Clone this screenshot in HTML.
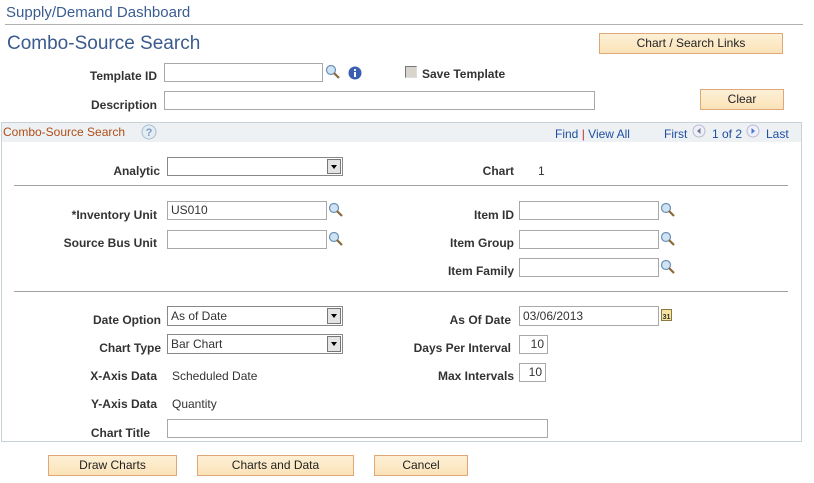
<!DOCTYPE html>
<html><head><meta charset="utf-8"><style>
body{margin:0;width:814px;height:483px;background:#fff;font-family:"Liberation Sans",Arial,sans-serif;position:relative;overflow:hidden}
.a{position:absolute}
.l{position:absolute;font-weight:bold;font-size:12px;color:#333;text-align:right;white-space:nowrap;line-height:14px}
.t{position:absolute;font-size:12px;color:#333;line-height:14px;white-space:nowrap}
.in{position:absolute;box-sizing:border-box;border:1px solid #a8a8a8;background:#fff;font-size:12px;color:#333;line-height:16px;padding-left:3px}
.btn{position:absolute;box-sizing:border-box;border:1px solid #e0a878;background:linear-gradient(#fdf0d6,#fbe3b8);font-size:12px;color:#222;text-align:center;line-height:18px}
.dd{position:absolute;right:1px;top:1px;width:14px;bottom:1px;background:#e4e4e4;border-left:1px solid #888;border:1px solid #777;box-sizing:border-box}
.dd:after{content:"";position:absolute;left:3px;top:5px;border:3.5px solid transparent;border-top:4px solid #000}
.sep{position:absolute;height:1px;background:#a0a0a0}
.link{color:#1f4fa0}
</style></head><body>
<div class="a" style="left:6px;top:4px;font-size:15px;color:#3a5d91">Supply/Demand Dashboard</div>
<div class="sep" style="left:5px;top:24px;width:798px;background:#b0b0b0"></div>
<div class="a" style="left:7px;top:33px;font-size:19px;color:#3b5a8e">Combo-Source Search</div>
<div class="btn" style="left:599px;top:33px;width:184px;height:21px">Chart / Search Links</div>

<div class="l" style="right:657px;top:69px">Template ID</div>
<div class="in" style="left:164px;top:63px;width:159px;height:19px"></div>
<svg class="a" style="left:325px;top:64px" width="16" height="16"><circle cx="6" cy="6" r="4.5" fill="#cfe3f5" stroke="#6b8fb5" stroke-width="1.2"/><line x1="9" y1="9" x2="14" y2="14" stroke="#8a6a3a" stroke-width="2.2"/></svg>
<svg class="a" style="left:348px;top:66px" width="14" height="14"><circle cx="7" cy="7" r="6.5" fill="#3a5fb0"/><rect x="6" y="6" width="2" height="5" fill="#fff"/><circle cx="7" cy="4" r="1.1" fill="#fff"/></svg>
<div class="a" style="left:405px;top:66px;width:12px;height:12px;box-sizing:border-box;border:1px solid #777;border-right-color:#ddd;border-bottom-color:#ddd;background:#d8d4cc"></div>
<div class="l" style="left:422px;top:67px">Save Template</div>

<div class="l" style="right:657px;top:98px">Description</div>
<div class="in" style="left:164px;top:91px;width:431px;height:19px"></div>
<div class="btn" style="left:700px;top:89px;width:84px;height:21px">Clear</div>

<div class="a" style="left:1px;top:122px;width:801px;height:320px;box-sizing:border-box;border:1px solid #c8d0d8"></div>
<div class="a" style="left:2px;top:123px;width:799px;height:19px;background:#edf1f4"></div>
<div class="a" style="left:3px;top:125px;font-size:12px;color:#b04d18">Combo-Source Search</div>
<svg class="a" style="left:141px;top:124px" width="16" height="16"><circle cx="8" cy="8" r="7" fill="#e4ecf4" stroke="#a9bdd2"/><text x="8" y="12" font-size="11" font-weight="bold" text-anchor="middle" fill="#7b9ac0" font-family="Liberation Sans">?</text></svg>
<div class="t" style="left:555px;top:127px"><span class="link">Find</span> <span style="color:#c03030">|</span> <span class="link">View All</span></div>
<div class="t link" style="left:664px;top:127px">First</div>
<svg class="a" style="left:692px;top:124px" width="14" height="14"><circle cx="7" cy="7" r="6" fill="#eef" stroke="#bbc"/><path d="M8.5 4 L5 7 L8.5 10Z" fill="#777"/></svg>
<div class="t link" style="left:712px;top:127px">1 of 2</div>
<svg class="a" style="left:746px;top:124px" width="14" height="14"><circle cx="7" cy="7" r="6" fill="#eef" stroke="#bbc"/><path d="M5.5 4 L9 7 L5.5 10Z" fill="#4a7ac8"/></svg>
<div class="t link" style="left:766px;top:127px">Last</div>

<div class="l" style="right:654px;top:164px">Analytic</div>
<div class="in" style="left:167px;top:157px;width:176px;height:19px;border-color:#888"><div class="dd"></div></div>
<div class="l" style="right:300px;top:164px">Chart</div>
<div class="t" style="left:538px;top:164px">1</div>
<div class="sep" style="left:14px;top:185px;width:774px"></div>

<div class="l" style="right:657px;top:208px">*Inventory Unit</div>
<div class="in" style="left:167px;top:201px;width:160px;height:19px">US010</div>
<svg class="a" style="left:328px;top:202px" width="16" height="16"><circle cx="6" cy="6" r="4.5" fill="#cfe3f5" stroke="#6b8fb5" stroke-width="1.2"/><line x1="9" y1="9" x2="14" y2="14" stroke="#8a6a3a" stroke-width="2.2"/></svg>
<div class="l" style="right:657px;top:236px">Source Bus Unit</div>
<div class="in" style="left:167px;top:230px;width:160px;height:19px"></div>
<svg class="a" style="left:328px;top:231px" width="16" height="16"><circle cx="6" cy="6" r="4.5" fill="#cfe3f5" stroke="#6b8fb5" stroke-width="1.2"/><line x1="9" y1="9" x2="14" y2="14" stroke="#8a6a3a" stroke-width="2.2"/></svg>

<div class="l" style="right:300px;top:208px">Item ID</div>
<div class="in" style="left:519px;top:201px;width:140px;height:19px"></div>
<svg class="a" style="left:660px;top:202px" width="16" height="16"><circle cx="6" cy="6" r="4.5" fill="#cfe3f5" stroke="#6b8fb5" stroke-width="1.2"/><line x1="9" y1="9" x2="14" y2="14" stroke="#8a6a3a" stroke-width="2.2"/></svg>
<div class="l" style="right:300px;top:236px">Item Group</div>
<div class="in" style="left:519px;top:230px;width:140px;height:19px"></div>
<svg class="a" style="left:660px;top:231px" width="16" height="16"><circle cx="6" cy="6" r="4.5" fill="#cfe3f5" stroke="#6b8fb5" stroke-width="1.2"/><line x1="9" y1="9" x2="14" y2="14" stroke="#8a6a3a" stroke-width="2.2"/></svg>
<div class="l" style="right:300px;top:264px">Item Family</div>
<div class="in" style="left:519px;top:258px;width:140px;height:19px"></div>
<svg class="a" style="left:660px;top:259px" width="16" height="16"><circle cx="6" cy="6" r="4.5" fill="#cfe3f5" stroke="#6b8fb5" stroke-width="1.2"/><line x1="9" y1="9" x2="14" y2="14" stroke="#8a6a3a" stroke-width="2.2"/></svg>
<div class="sep" style="left:14px;top:291px;width:774px"></div>

<div class="l" style="right:653px;top:313px">Date Option</div>
<div class="in" style="left:167px;top:306px;width:176px;height:20px;border-color:#888;line-height:18px">As of Date<div class="dd"></div></div>
<div class="l" style="right:303px;top:313px">As Of Date</div>
<div class="in" style="left:519px;top:306px;width:140px;height:20px;line-height:18px">03/06/2013</div>
<svg class="a" style="left:661px;top:308px" width="12" height="14"><rect x="0.5" y="1.5" width="10" height="11" fill="#f4e4a0" stroke="#8a7a40"/><text x="5.5" y="11" font-size="7" font-weight="bold" text-anchor="middle" fill="#333" font-family="Liberation Sans">31</text></svg>

<div class="l" style="right:653px;top:341px">Chart Type</div>
<div class="in" style="left:167px;top:334px;width:176px;height:20px;border-color:#888;line-height:18px">Bar Chart<div class="dd"></div></div>
<div class="l" style="right:303px;top:341px">Days Per Interval</div>
<div class="in" style="left:519px;top:335px;width:29px;height:19px;text-align:right;padding-right:3px">10</div>

<div class="l" style="right:657px;top:369px">X-Axis Data</div>
<div class="t" style="left:172px;top:369px">Scheduled Date</div>
<div class="l" style="right:300px;top:369px">Max Intervals</div>
<div class="in" style="left:519px;top:363px;width:27px;height:19px;text-align:right;padding-right:3px">10</div>

<div class="l" style="right:657px;top:397px">Y-Axis Data</div>
<div class="t" style="left:172px;top:397px">Quantity</div>
<div class="l" style="right:664px;top:426px">Chart Title</div>
<div class="in" style="left:167px;top:419px;width:381px;height:19px"></div>

<div class="btn" style="left:48px;top:455px;width:129px;height:21px">Draw Charts</div>
<div class="btn" style="left:197px;top:455px;width:157px;height:21px">Charts and Data</div>
<div class="btn" style="left:374px;top:455px;width:94px;height:21px">Cancel</div>
</body></html>
